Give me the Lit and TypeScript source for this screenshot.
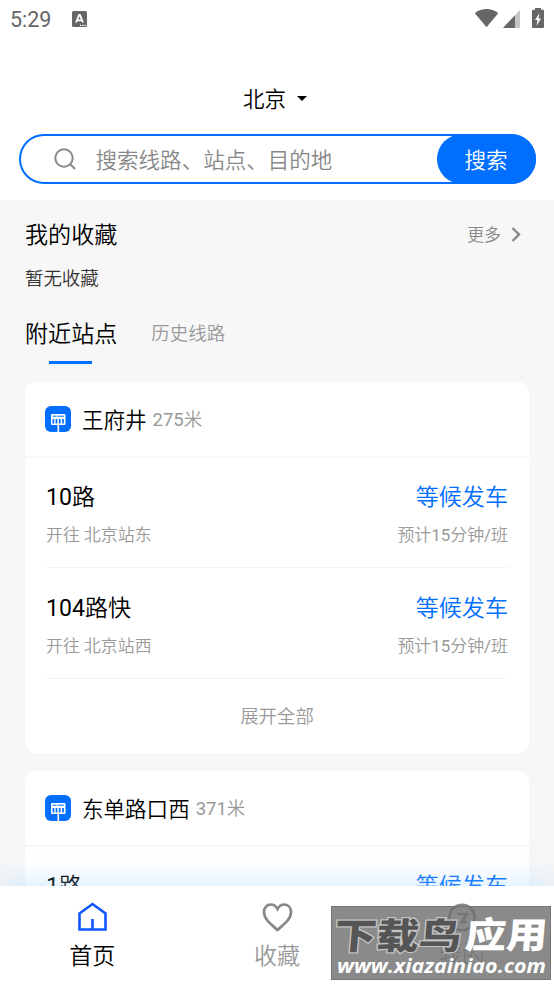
import { LitElement, html, css, svg, nothing } from 'lit';
import { customElement, property } from 'lit/decorators.js';

interface BusLine {
    name: string;
    target: string;
    status: string;
    interval: string;
}

interface Station {
    name: string;
    distance: string;
    lines: BusLine[];
    more: boolean;
}

const STATIONS: Station[] = [
    {
        name: '王府井',
        distance: '275米',
        more: true,
        lines: [
            { name: '10路', target: '北京站东', status: '等候发车', interval: '预计15分钟/班' },
            { name: '104路快', target: '北京站西', status: '等候发车', interval: '预计15分钟/班' }
        ]
    },
    {
        name: '东单路口西',
        distance: '371米',
        more: false,
        lines: [
            { name: '1路', target: '', status: '等候发车', interval: '' }
        ]
    }
];

// digits are set one step heavier than the Chinese text around them
const digits = (text: string) =>
    text.split(/([\d/]+)/).map((part) => (/^[\d/]/.test(part) ? html`<b>${part}</b>` : part));

@customElement('station-card')
export class StationCard extends LitElement {
    @property({ attribute: false }) station!: Station;

    static styles = css`
        :host {
            display: block;
            background: #fff;
            border-radius: 10px;
            overflow: hidden;
        }

        b {
            font-weight: 400;
        }

        .head {
            display: flex;
            align-items: center;
            height: 74px;
            padding-left: 20px;
            border-bottom: 2px solid #f7f7f7;
        }

        .head svg {
            width: 26px;
            height: 26px;
        }

        .head span {
            padding-bottom: 2px;
        }

        .name {
            margin-left: 11px;
            font-size: 21.54px;
        }

        .distance {
            margin-left: 6px;
            font-size: 18.46px;
            color: #999;
        }

        .lines {
            margin: -1px 21px 0;
        }

        .line {
            display: flex;
            flex-direction: column;
            gap: 7px;
            box-sizing: border-box;
            height: 111px;
            padding-top: 25px;
            border-bottom: 1px solid #f4f4f4;
        }

        .row {
            display: flex;
            justify-content: space-between;
            height: 32px;
            line-height: 32px;
            font-size: 23.08px;
        }

        .row.sub {
            height: 28px;
            line-height: 28px;
            font-size: 16.92px;
            color: #999;
        }

        .status {
            color: #006eff;
        }

        .more {
            height: 74px;
            line-height: 76px;
            text-align: center;
            font-size: 18.46px;
            color: #999;
        }
    `;

    render() {
        const { name, distance, lines, more } = this.station;
        return html`
            <div class="head">
                <svg viewBox="0 0 26 26">
                    <rect width="26" height="26" rx="6" fill="#006eff"/>
                    <rect x="6" y="8" width="14.500" height="11" rx="1" fill="#fff"/>
                    <path d="M7.500 10.200h4M12.500 10.200h6.500" stroke="#006eff" stroke-width="1"/>
                    <path d="M8.400 13v4.500M11.500 13v4.500M14.700 13v4.500M18 13v4.500" stroke="#006eff" stroke-width="1.700"/>
                    <path d="M13.300 18v8" stroke="#fff" stroke-width="1.600"/>
                </svg>
                <span class="name">${name}</span>
                <span class="distance">${digits(distance)}</span>
            </div>
            <div class="lines">
                ${lines.map((line) => html`
                    <div class="line">
                        <div class="row">
                            <span>${digits(line.name)}</span>
                            <span class="status">${line.status}</span>
                        </div>
                        ${line.target ? html`
                            <div class="row sub">
                                <span>开往 ${line.target}</span>
                                <span>${digits(line.interval)}</span>
                            </div>` : nothing}
                    </div>`)}
            </div>
            ${more ? html`<div class="more">展开全部</div>` : nothing}
        `;
    }
}

const NAV = [
    {
        label: '首页',
        active: true,
        icon: svg`<path d="M3.500 11.500 16.500 2l13 9.500V27.500h-26zM16.500 27.500V17" stroke-width="2.600"/>`
    },
    {
        label: '收藏',
        active: false,
        icon: svg`<path d="M16.500 28C9 21.500 3 17 3 10 3 5.500 6 2.500 10 2.500c2.800 0 5 1.700 6.500 4.500C18 4.200 20.200 2.500 23 2.500c4 0 7 3 7 7.500 0 7-6 11.500-13.500 18z" stroke-width="2.700"/>`
    },
    {
        label: '我的',
        active: false,
        icon: svg`<circle cx="16" cy="15.500" r="12.700" stroke-width="2.600"/><path d="M11 12h10l-5 8h5" stroke-width="2.600"/>`
    }
];

@customElement('app-root')
export class AppRoot extends LitElement {
    static styles = css`
        :host {
            display: flex;
            flex-direction: column;
            position: relative;
            width: 554px;
            height: 984px;
            overflow: hidden;
            background: #f7f7f7;
            color: #000;
            font-family: Roboto, "Noto Sans CJK SC", sans-serif;
            font-weight: 350;
        }

        header {
            flex: none;
            height: 200px;
            background: #fff;
        }

        .statusbar {
            display: flex;
            align-items: center;
            height: 38px;
            padding: 0 8px 0 10px;
            font-size: 21.5px;
            font-weight: 400;
            color: #666;
        }

        .badge {
            width: 15px;
            height: 16px;
            margin-left: 21px;
        }

        .signals {
            width: 72px;
            height: 22px;
            margin-left: auto;
        }

        .city {
            display: flex;
            align-items: center;
            justify-content: center;
            gap: 11px;
            height: 32px;
            padding: 43px 4px 21px 0;
            font-size: 21.54px;
        }

        .caret {
            width: 10px;
            height: 5px;
            margin-top: 2px;
        }

        .search {
            display: flex;
            align-items: center;
            box-sizing: border-box;
            height: 50px;
            margin: 0 18.5px;
            border: 2px solid #006eff;
            border-radius: 25px;
            font-size: 21.54px;
            color: #888;
        }

        .search span {
            padding-bottom: 2px;
        }

        .search svg {
            width: 22px;
            height: 22px;
            margin: 0 19.5px 0 33.5px;
        }

        .search button {
            width: 99px;
            height: 50px;
            margin: 0 -2px 0 auto;
            padding: 0 0 1px;
            border: 0;
            border-radius: 25px;
            background: #006eff;
            color: #fff;
            font: inherit;
        }

        main {
            flex: 1;
            min-height: 0;
            overflow: hidden;
            padding: 0 25px;
        }

        .title {
            display: flex;
            align-items: center;
            height: 34px;
            padding: 16px 0 1px;
            font-size: 23.08px;
        }

        .all {
            display: flex;
            align-items: center;
            gap: 10px;
            margin: 0 8px 0 auto;
            font-size: 16.92px;
            color: #888;
        }

        .all svg {
            width: 10px;
            height: 15px;
            margin-top: 2px;
        }

        .empty {
            height: 28px;
            padding: 14px 0 22px;
            line-height: 28px;
            font-size: 18.46px;
            color: #333;
        }

        .tabs {
            display: flex;
            align-items: center;
            gap: 34px;
            height: 34px;
            font-size: 23.08px;
        }

        .tabs .idle {
            font-size: 18.46px;
            color: #999;
        }

        .underline {
            width: 43px;
            height: 3px;
            margin: 12px 0 18px 24px;
            background: #006eff;
        }

        .stations {
            display: flex;
            flex-direction: column;
            gap: 18px;
        }

        nav {
            flex: none;
            display: grid;
            grid-template-columns: repeat(3, 1fr);
            position: relative;
            height: 98px;
            background: #fff;
            box-shadow: 0 0 28px rgba(150, 210, 255, 0.5);
        }

        .item {
            display: flex;
            flex-direction: column;
            align-items: center;
            padding-top: 16px;
            font-size: 23.08px;
            line-height: 34px;
            color: #999;
        }

        .item svg {
            width: 32px;
            height: 32px;
            margin-bottom: 6px;
            fill: none;
            stroke: #888;
        }

        .item.active {
            color: #000;
        }

        .item.active svg {
            stroke: #0f56ff;
        }

        .stamp {
            position: absolute;
            right: 3px;
            bottom: 4px;
            width: 220px;
            height: 74px;
        }

        .stamp text {
            font-family: "Noto Sans CJK SC", sans-serif;
            font-weight: 900;
        }

        .stamp .url {
            font-family: "Open Sans", sans-serif;
            font-weight: 700;
            font-style: italic;
        }
    `;

    render() {
        return html`
            <header>
                <div class="statusbar">
                    <span>5:29</span>
                    <svg class="badge" viewBox="0 0 15 16">
                        <rect width="15" height="16" rx="1.500" fill="#666"/>
                        <path d="M4 11.500 7.100 4h.8L11 11.500M5.200 9.300h4.600" fill="none" stroke="#fff" stroke-width="1.800"/>
                        <path d="M8 14.300h1.300M10.300 14.300h1.300M12.600 14.300h1.300" stroke="#fff" stroke-width="1.200"/>
                    </svg>
                    <svg class="signals" viewBox="0 0 72 22">
                        <path d="M.800 5.300C7.500-.300 17.500-.300 24.200 5.300L12.500 19.300z" fill="#666"/>
                        <path d="M29 20 46 2v18z" fill="#c4c4c4"/>
                        <path d="M29 20 41 7.300V20z" fill="#666"/>
                        <path d="M61 0h6v1.800h2q1 0 1 1V19q0 1-1 1H59q-1 0-1-1V2.800q0-1 1-1h2z" fill="#666"/>
                        <path d="M65.500 5 61 12h2.500l-1 6L67 10.500h-2.500z" fill="#fff"/>
                    </svg>
                </div>
                <div class="city">
                    <span>北京</span>
                    <svg class="caret" viewBox="0 0 10 5"><path d="M0 0h10L5 5z"/></svg>
                </div>
                <div class="search">
                    <svg viewBox="0 0 22 22" fill="none" stroke="#888" stroke-width="2">
                        <circle cx="10" cy="10" r="8.700"/>
                        <path d="m16 16 5 5"/>
                    </svg>
                    <span>搜索线路、站点、目的地</span>
                    <button>搜索</button>
                </div>
            </header>
            <main>
                <div class="title">
                    <span>我的收藏</span>
                    <div class="all">
                        <span>更多</span>
                        <svg viewBox="0 0 10 15"><path d="m1.500 1 6.500 6.500L1.500 14" fill="none" stroke="#888" stroke-width="2.400"/></svg>
                    </div>
                </div>
                <div class="empty">暂无收藏</div>
                <div class="tabs">
                    <span>附近站点</span>
                    <span class="idle">历史线路</span>
                </div>
                <div class="underline"></div>
                <div class="stations">
                    ${STATIONS.map((station) => html`<station-card .station=${station}></station-card>`)}
                </div>
            </main>
            <nav>
                ${NAV.map((item) => html`
                    <div class="item ${item.active ? 'active' : ''}">
                        <svg viewBox="0 0 32 32">${item.icon}</svg>
                        <span>${item.label}</span>
                    </div>`)}
            </nav>
            <svg class="stamp" viewBox="0 0 220 74">
                <rect width="220" height="74" fill="#707070" fill-opacity="0.82"/>
                <rect x=".5" y=".5" width="219" height="73" fill="none" stroke="#757575"/>
                <g transform="skewX(-5)">
                    <text x="6" y="43" font-size="36" textLength="127" lengthAdjust="spacingAndGlyphs"
                        fill="#555" stroke="#c4c4c4" stroke-width="2.500" paint-order="stroke">下载鸟</text>
                    <text x="137" y="42" font-size="36" textLength="82" lengthAdjust="spacingAndGlyphs" fill="#fff">应用</text>
                </g>
                <text class="url" x="6" y="67" font-size="20" textLength="209" lengthAdjust="spacingAndGlyphs" fill="#fff">www.xiazainiao.com</text>
            </svg>
        `;
    }
}
